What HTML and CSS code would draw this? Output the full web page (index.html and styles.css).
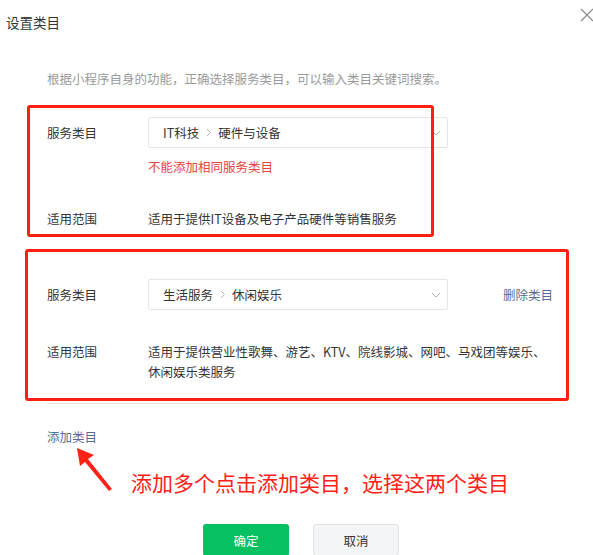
FILE: index.html
```html
<!DOCTYPE html>
<html lang="zh">
<head>
<meta charset="utf-8">
<title>设置类目</title>
<link rel="stylesheet" href="styles.css">
</head>
<body>
<div class="dialog">
  <div class="title">设置类目</div>
  <svg class="close" width="14" height="14" viewBox="0 0 14 14"><path d="M1 1L13 13M13 1L1 13" stroke="#888" stroke-width="1.2" fill="none"/></svg>
  <div class="hint">根据小程序自身的功能，正确选择服务类目，可以输入类目关键词搜索。</div>

  <div class="section">
    <div class="row">
      <div class="label">服务类目</div>
      <div class="select">
        <span class="path">IT科技<svg class="sep" width="6" height="9" viewBox="0 0 6 9"><path d="M1 1L4.5 4.5L1 8" stroke="#b2b2b2" fill="none"/></svg>硬件与设备</span>
        <svg class="arrow-down" width="10" height="6" viewBox="0 0 10 6"><path d="M1 1L5 5L9 1" stroke="#b2b2b2" fill="none"/></svg>
      </div>
    </div>
    <div class="error">不能添加相同服务类目</div>
    <div class="row desc-row">
      <div class="label">适用范围</div>
      <div class="desc">适用于提供IT设备及电子产品硬件等销售服务</div>
    </div>
  </div>

  <div class="section">
    <div class="row">
      <div class="label">服务类目</div>
      <div class="select">
        <span class="path">生活服务<svg class="sep" width="6" height="9" viewBox="0 0 6 9"><path d="M1 1L4.5 4.5L1 8" stroke="#b2b2b2" fill="none"/></svg>休闲娱乐</span>
        <svg class="arrow-down" width="10" height="6" viewBox="0 0 10 6"><path d="M1 1L5 5L9 1" stroke="#b2b2b2" fill="none"/></svg>
      </div>
      <a class="link delete">删除类目</a>
    </div>
    <div class="row desc-row">
      <div class="label">适用范围</div>
      <div class="desc">适用于提供营业性歌舞、游艺、KTV、院线影城、网吧、马戏团等娱乐、休闲娱乐类服务</div>
    </div>
  </div>

  <a class="link add">添加类目</a>

  <div class="buttons">
    <button class="btn primary">确定</button>
    <button class="btn default">取消</button>
  </div>

  <div class="mark mark1"></div>
  <div class="mark mark2"></div>
  <svg class="pointer" width="60" height="60" viewBox="0 0 60 60"><polygon points="2,2 19,9 13,13 37,43 34,45 10,16 5,20" fill="#ff2218"/></svg>
  <div class="note">添加多个点击添加类目，选择这两个类目</div>
</div>
</body>
</html>
```
FILE: styles.css
```css
* { box-sizing: border-box; }
html, body { margin: 0; padding: 0; background: #fff; }
body {
  font-family: "Noto Sans CJK SC", "Microsoft YaHei", sans-serif;
  font-size: 12.5px;
  color: #353535;
  width: 593px;
  height: 555px;
  overflow: hidden;
}
.dialog { position: relative; width: 593px; height: 555px; }
.title {
  padding: 12px 0 0 6px;
  font-size: 13.5px;
  line-height: 20px;
  color: #353535;
}
.close { position: absolute; left: 580px; top: 8px; }
.hint {
  margin: 37px 0 0 47px;
  line-height: 20px;
  color: #9a9a9a;
}
.section {
  margin-left: 47px;
  width: 506px;
  padding: 28px 0 21px;
  border-bottom: 1px solid #e8e8e8;
}
.row { display: flex; align-items: center; }
.label { width: 101px; flex: none; line-height: 20px; color: #353535; }
.select {
  width: 300px;
  height: 31px;
  border: 1px solid #e6e6e6;
  border-radius: 2px;
  padding: 0 6px 0 14px;
  display: flex;
  align-items: center;
  justify-content: space-between;
}
.path { display: flex; align-items: center; color: #353535; }
.sep { margin: 0 6px 0 7px; }
.error {
  margin: 9px 0 0 101px;
  line-height: 20px;
  color: #e64340;
}
.desc-row { margin-top: 32px; align-items: flex-start; }
.desc { flex: 1; line-height: 20px; color: #353535; }
.link { color: #576b95; text-decoration: none; line-height: 20px; }
.delete { margin-left: auto; }
.add { display: block; margin: 23px 0 0 47px; }
.buttons {
  display: flex;
  gap: 24px;
  margin: 77px 0 0 203px;
}
.btn {
  width: 86px;
  height: 32px;
  border-radius: 3px;
  font-family: inherit;
  font-size: 12.5px;
  cursor: pointer;
}
.primary { background: #07c160; color: #fff; border: none; }
.default { background: #f4f5f7; color: #353535; border: 1px solid #e2e3e5; }
.mark {
  position: absolute;
  border: 3px solid #ff1e12;
  border-radius: 3px;
}
.mark1 { left: 27px; top: 105px; width: 407px; height: 132px; }
.mark2 { left: 25px; top: 249px; width: 544px; height: 152px; }
.pointer { position: absolute; left: 75px; top: 446px; }
.note {
  position: absolute;
  left: 131px;
  top: 467px;
  font-size: 21px;
  line-height: 30px;
  color: #ff2218;
  white-space: nowrap;
}
```
